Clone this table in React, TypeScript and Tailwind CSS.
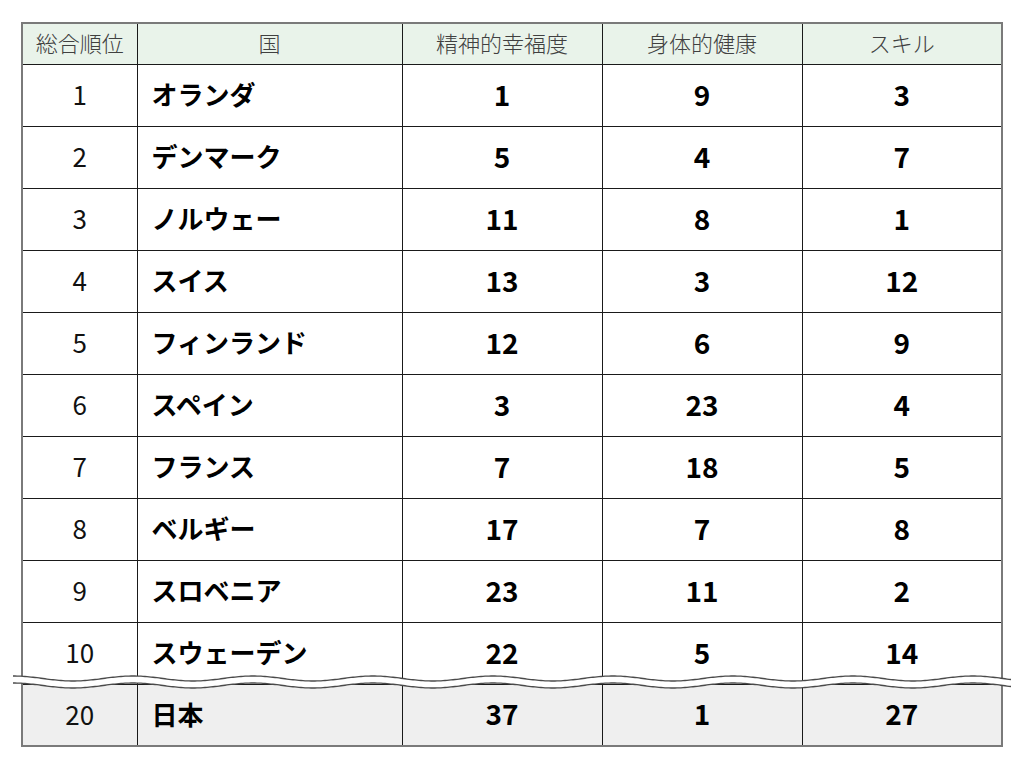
import React from "react";

type Row = {
  rank: number;
  country: string;
  mental: number;
  physical: number;
  skill: number;
};

const rows: Row[] = [
  { rank: 1, country: "オランダ", mental: 1, physical: 9, skill: 3 },
  { rank: 2, country: "デンマーク", mental: 5, physical: 4, skill: 7 },
  { rank: 3, country: "ノルウェー", mental: 11, physical: 8, skill: 1 },
  { rank: 4, country: "スイス", mental: 13, physical: 3, skill: 12 },
  { rank: 5, country: "フィンランド", mental: 12, physical: 6, skill: 9 },
  { rank: 6, country: "スペイン", mental: 3, physical: 23, skill: 4 },
  { rank: 7, country: "フランス", mental: 7, physical: 18, skill: 5 },
  { rank: 8, country: "ベルギー", mental: 17, physical: 7, skill: 8 },
  { rank: 9, country: "スロベニア", mental: 23, physical: 11, skill: 2 },
  { rank: 10, country: "スウェーデン", mental: 22, physical: 5, skill: 14 },
];

const japan: Row = { rank: 20, country: "日本", mental: 37, physical: 1, skill: 27 };

const headers = ["総合順位", "国", "精神的幸福度", "身体的健康", "スキル"];

// sine points for the "omitted rows" break mark
function wavePath(width: number, center: number, amp: number, period: number) {
  const pts: string[] = [];
  for (let x = 0; x <= width; x += 2) {
    const y = center - amp * Math.cos((2 * Math.PI * x) / period);
    pts.push(`${x},${y.toFixed(2)}`);
  }
  return pts;
}

function BreakLine() {
  const w = 998;
  const top = wavePath(w, 8.5, 2.5, 120);
  const bottom = wavePath(w, 15.5, 2.5, 120);
  const fill = `M${top.join(" L")} L${[...bottom].reverse().join(" L")} Z`;
  return (
    <svg
      className="absolute left-[-8px] top-[648px]"
      width={w}
      height={22}
      viewBox={`0 0 ${w} 22`}
    >
      <path d={fill} fill="#ffffff" />
      <path d={`M${top.join(" L")}`} fill="none" stroke="#4a4a4a" strokeWidth={1.3} />
      <path d={`M${bottom.join(" L")}`} fill="none" stroke="#4a4a4a" strokeWidth={1.3} />
    </svg>
  );
}

function DataRow({ row, shaded }: { row: Row; shaded?: boolean }) {
  const bg = shaded ? "bg-[#efefef]" : "bg-white";
  return (
    <tr className={`h-[62px] ${bg}`}>
      <td className="border border-[#1a1a1a] pb-[3px] text-center text-[26px] font-normal text-[#111]">
        {row.rank}
      </td>
      <td className="border border-[#1a1a1a] pb-[3px] pl-[14px] text-left text-[26px] font-bold text-black">
        {row.country}
      </td>
      <td className="border border-[#1a1a1a] pb-[3px] text-center text-[28px] font-bold text-black">
        {row.mental}
      </td>
      <td className="border border-[#1a1a1a] pb-[3px] text-center text-[28px] font-bold text-black">
        {row.physical}
      </td>
      <td className="border border-[#1a1a1a] pb-[3px] text-center text-[28px] font-bold text-black">
        {row.skill}
      </td>
    </tr>
  );
}

export default function App() {
  return (
    <div
      className="min-h-[768px] w-[1024px] bg-white pl-[21px] pt-[22px]"
      style={{ fontFamily: '"Noto Sans CJK JP", "Noto Sans", sans-serif' }}
    >
      <div className="relative w-[980px]">
        <table className="w-[980px] table-fixed border-collapse border-2 border-[#7a7a7a]">
          <colgroup>
            <col className="w-[115px]" />
            <col className="w-[265px]" />
            <col className="w-[200px]" />
            <col className="w-[200px]" />
            <col className="w-[200px]" />
          </colgroup>
          <thead>
            <tr className="h-[41px] bg-[#e9f3ea]">
              {headers.map((h) => (
                <th
                  key={h}
                  className="border border-[#1a1a1a] pb-[3px] text-center text-[22px] font-light leading-none text-[#404040]"
                >
                  {h}
                </th>
              ))}
            </tr>
          </thead>
          <tbody>
            {rows.map((r) => (
              <DataRow key={r.rank} row={r} />
            ))}
            <DataRow row={japan} shaded />
          </tbody>
        </table>
        <BreakLine />
      </div>
    </div>
  );
}
